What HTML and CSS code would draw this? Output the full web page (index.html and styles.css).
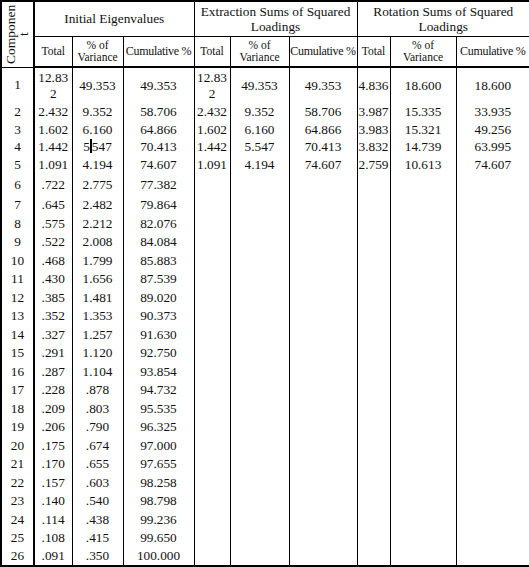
FILE: index.html
```html
<!DOCTYPE html>
<html lang="en">
<head>
    <meta charset="UTF-8">
    <title>Total Variance Explained</title>
    <link rel="stylesheet" href="styles.css">
</head>
<body>
<table class="variance">
    <colgroup>
        <col class="cComp">
        <col class="cTot1"><col class="cVar1"><col class="cCum1">
        <col class="cTot2"><col class="cVar2"><col class="cCum2">
        <col class="cTot3"><col class="cVar3"><col class="cCum3">
    </colgroup>
    <thead>
    <tr class="headTop">
        <th rowspan="2" class="compHead"><div class="compText">Component</div></th>
        <th colspan="3">Initial Eigenvalues</th>
        <th colspan="3">Extraction Sums of Squared Loadings</th>
        <th colspan="3">Rotation Sums of Squared Loadings</th>
    </tr>
    <tr class="headSub">
        <th>Total</th><th>% of<br>Variance</th><th class="cum">Cumulative %</th>
        <th>Total</th><th>% of<br>Variance</th><th class="cum">Cumulative %</th>
        <th>Total</th><th>% of<br>Variance</th><th class="cum">Cumulative %</th>
    </tr>
    </thead>
    <tbody>
    <tr class="rowFirst">
        <td>1</td><td>12.83<br>2</td><td>49.353</td><td>49.353</td>
        <td>12.83<br>2</td><td>49.353</td><td>49.353</td>
        <td>4.836</td><td>18.600</td><td>18.600</td>
    </tr>
    <tr class="rowShort">
        <td>2</td><td>2.432</td><td>9.352</td><td>58.706</td>
        <td>2.432</td><td>9.352</td><td>58.706</td>
        <td>3.987</td><td>15.335</td><td>33.935</td>
    </tr>
    <tr class="rowShort">
        <td>3</td><td>1.602</td><td>6.160</td><td>64.866</td>
        <td>1.602</td><td>6.160</td><td>64.866</td>
        <td>3.983</td><td>15.321</td><td>49.256</td>
    </tr>
    <tr class="rowShort">
        <td>4</td><td>1.442</td><td>5<span class="caret"></span>547</td><td>70.413</td>
        <td>1.442</td><td>5.547</td><td>70.413</td>
        <td>3.832</td><td>14.739</td><td>63.995</td>
    </tr>
    <tr class="rowShort">
        <td>5</td><td>1.091</td><td>4.194</td><td>74.607</td>
        <td>1.091</td><td>4.194</td><td>74.607</td>
        <td>2.759</td><td>10.613</td><td>74.607</td>
    </tr>
    <tr class="rowSix">
        <td>6</td><td>.722</td><td>2.775</td><td>77.382</td>
        <td></td><td></td><td></td><td></td><td></td><td></td>
    </tr>
    <tr><td>7</td><td>.645</td><td>2.482</td><td>79.864</td><td></td><td></td><td></td><td></td><td></td><td></td></tr>
    <tr><td>8</td><td>.575</td><td>2.212</td><td>82.076</td><td></td><td></td><td></td><td></td><td></td><td></td></tr>
    <tr><td>9</td><td>.522</td><td>2.008</td><td>84.084</td><td></td><td></td><td></td><td></td><td></td><td></td></tr>
    <tr><td>10</td><td>.468</td><td>1.799</td><td>85.883</td><td></td><td></td><td></td><td></td><td></td><td></td></tr>
    <tr><td>11</td><td>.430</td><td>1.656</td><td>87.539</td><td></td><td></td><td></td><td></td><td></td><td></td></tr>
    <tr><td>12</td><td>.385</td><td>1.481</td><td>89.020</td><td></td><td></td><td></td><td></td><td></td><td></td></tr>
    <tr><td>13</td><td>.352</td><td>1.353</td><td>90.373</td><td></td><td></td><td></td><td></td><td></td><td></td></tr>
    <tr><td>14</td><td>.327</td><td>1.257</td><td>91.630</td><td></td><td></td><td></td><td></td><td></td><td></td></tr>
    <tr><td>15</td><td>.291</td><td>1.120</td><td>92.750</td><td></td><td></td><td></td><td></td><td></td><td></td></tr>
    <tr><td>16</td><td>.287</td><td>1.104</td><td>93.854</td><td></td><td></td><td></td><td></td><td></td><td></td></tr>
    <tr><td>17</td><td>.228</td><td>.878</td><td>94.732</td><td></td><td></td><td></td><td></td><td></td><td></td></tr>
    <tr><td>18</td><td>.209</td><td>.803</td><td>95.535</td><td></td><td></td><td></td><td></td><td></td><td></td></tr>
    <tr><td>19</td><td>.206</td><td>.790</td><td>96.325</td><td></td><td></td><td></td><td></td><td></td><td></td></tr>
    <tr><td>20</td><td>.175</td><td>.674</td><td>97.000</td><td></td><td></td><td></td><td></td><td></td><td></td></tr>
    <tr><td>21</td><td>.170</td><td>.655</td><td>97.655</td><td></td><td></td><td></td><td></td><td></td><td></td></tr>
    <tr><td>22</td><td>.157</td><td>.603</td><td>98.258</td><td></td><td></td><td></td><td></td><td></td><td></td></tr>
    <tr><td>23</td><td>.140</td><td>.540</td><td>98.798</td><td></td><td></td><td></td><td></td><td></td><td></td></tr>
    <tr><td>24</td><td>.114</td><td>.438</td><td>99.236</td><td></td><td></td><td></td><td></td><td></td><td></td></tr>
    <tr><td>25</td><td>.108</td><td>.415</td><td>99.650</td><td></td><td></td><td></td><td></td><td></td><td></td></tr>
    <tr><td>26</td><td>.091</td><td>.350</td><td>100.000</td><td></td><td></td><td></td><td></td><td></td><td></td></tr>
    </tbody>
</table>
</body>
</html>
```

FILE: styles.css
```css
* {
    margin: 0;
    padding: 0;
}

html, body {
    background: #fff;
}

body {
    font-family: "Liberation Serif", "Times New Roman", serif;
    color: #111;
}

.variance {
    width: 529px;
    table-layout: fixed;
    border-collapse: collapse;
    border: 2px solid #000;
    font-size: 13.3px;
}

/* column widths */
.cComp { width: 33px; }
.cTot1 { width: 38px; }
.cVar1 { width: 51px; }
.cCum1 { width: 71px; }
.cTot2 { width: 36px; }
.cVar2 { width: 59px; }
.cCum2 { width: 68px; }
.cTot3 { width: 33px; }
.cVar3 { width: 66px; }
.cCum3 { width: 74px; }

.variance th,
.variance td {
    border-left: 1px solid #000;
    border-right: 1px solid #000;
    text-align: center;
    vertical-align: middle;
    font-weight: normal;
    padding: 0;
    overflow: hidden;
    white-space: nowrap;
}

.variance th {
    border-top: 1px solid #000;
    border-bottom: 1px solid #000;
}

.variance td:first-child,
.variance th.compHead {
    border-right: 2px solid #000;
}

/* header */
.headTop {
    height: 35px;
}

.headTop th {
    font-size: 13.3px;
    line-height: 15px;
    white-space: normal;
}

.headSub {
    height: 31px;
}

.headSub th {
    font-size: 11.5px;
    line-height: 12.5px;
    border-bottom: 2px solid #000;
}

.headSub th.cum {
    font-size: 12px;
    letter-spacing: -0.3px;
}

.compText {
    writing-mode: vertical-rl;
    transform: rotate(180deg);
    height: 60px;
    width: 28px;
    margin: 0 auto;
    font-size: 13.5px;
    line-height: 13px;
    white-space: normal;
    word-break: break-all;
    text-align: center;
}

/* body rows */
.variance tbody tr {
    height: 18.5px;
    line-height: 16px;
}

.variance tbody tr.rowFirst {
    height: 36px;
}

.variance tbody tr.rowShort {
    height: 17.7px;
}

.variance tbody tr.rowSix {
    height: 22px;
}

.caret {
    display: inline-block;
    width: 2px;
    height: 14px;
    background: #000;
    vertical-align: -2px;
}
```
